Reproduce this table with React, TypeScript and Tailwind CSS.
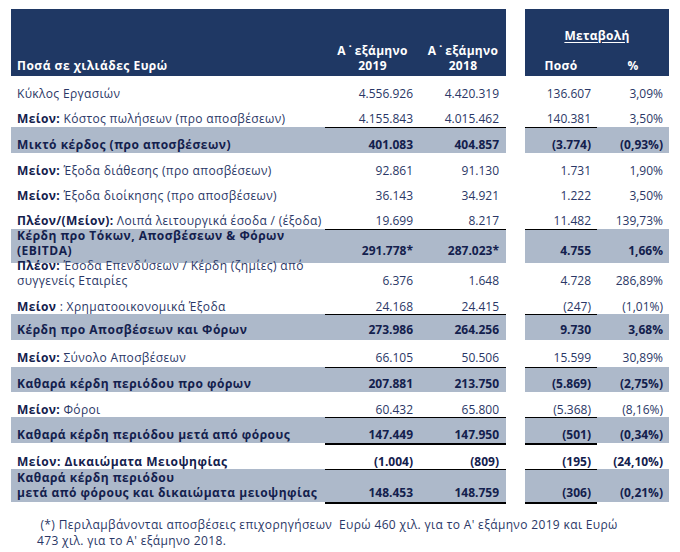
import React from "react";

type Row = {
  label: React.ReactNode;
  v: [string, string, string, string];
  grey?: boolean;
  bold?: boolean;
  h: string;
  pb: string;
  lineTop?: boolean;
  thick?: boolean;
};

const B = ({ children }: { children: React.ReactNode }) => (
  <span className="font-bold text-[#13204d]">{children}</span>
);

const rows: Row[] = [
  { label: "Κύκλος Εργασιών", v: ["4.556.926", "4.420.319", "136.607", "3,09%"], h: "h-[26px]", pb: "pb-[1px]" },
  { label: <><B>Μείον:</B> Κόστος πωλήσεων (προ αποσβέσεων)</>, v: ["4.155.843", "4.015.462", "140.381", "3,50%"], h: "h-[25px]", pb: "pb-[1px]" },
  { label: "Μικτό κέρδος (προ αποσβέσεων)", v: ["401.083", "404.857", "(3.774)", "(0,93%)"], grey: true, bold: true, h: "h-[26px]", pb: "pb-[1px]", lineTop: true },
  { label: <><B>Μείον:</B> Έξοδα διάθεσης (προ αποσβέσεων)</>, v: ["92.861", "91.130", "1.731", "1,90%"], h: "h-[26px]", pb: "pb-[1px]" },
  { label: <><B>Μείον:</B> Έξοδα διοίκησης (προ αποσβέσεων)</>, v: ["36.143", "34.921", "1.222", "3,50%"], h: "h-[25px]", pb: "pb-[1px]" },
  { label: <><B>Πλέον/(Μείον):</B> Λοιπά λειτουργικά έσοδα / (έξοδα)</>, v: ["19.699", "8.217", "11.482", "139,73%"], h: "h-[25px]", pb: "pb-[1px]" },
  { label: <>Κέρδη προ Τόκων, Αποσβέσεων &amp; Φόρων<br />(EBITDA)</>, v: ["291.778*", "287.023*", "4.755", "1,66%"], grey: true, bold: true, h: "h-[34px]", pb: "pb-[5px]", lineTop: true },
  { label: <><B>Πλέον:</B> Έσοδα Επενδύσεων / Κέρδη (ζημίες) από<br />συγγενείς Εταιρίες</>, v: ["6.376", "1.648", "4.728", "286,89%"], h: "h-[29px]", pb: "pb-[4px]" },
  { label: <><B>Μείον</B> : Χρηματοοικονομικά Έξοδα</>, v: ["24.168", "24.415", "(247)", "(1,01%)"], h: "h-[22px]", pb: "pb-[0px]" },
  { label: "Κέρδη προ Αποσβέσεων και Φόρων", v: ["273.986", "264.256", "9.730", "3,68%"], grey: true, bold: true, h: "h-[26px]", pb: "pb-[3px]", lineTop: true },
  { label: <><B>Μείον:</B> Σύνολο Αποσβέσεων</>, v: ["66.105", "50.506", "15.599", "30,89%"], h: "h-[27px]", pb: "pb-[2px]" },
  { label: "Καθαρά κέρδη περιόδου προ φόρων", v: ["207.881", "213.750", "(5.869)", "(2,75%)"], grey: true, bold: true, h: "h-[25px]", pb: "pb-[1px]", lineTop: true },
  { label: <><B>Μείον:</B> Φόροι</>, v: ["60.432", "65.800", "(5.368)", "(8,16%)"], h: "h-[25px]", pb: "pb-[0px]" },
  { label: "Καθαρά κέρδη περιόδου μετά από φόρους", v: ["147.449", "147.950", "(501)", "(0,34%)"], grey: true, bold: true, h: "h-[28px]", pb: "pb-[1px]", lineTop: true, thick: true },
  { label: "Μείον: Δικαιώματα Μειοψηφίας", v: ["(1.004)", "(809)", "(195)", "(24,10%)"], bold: true, h: "h-[24px]", pb: "pb-[0px]" },
  { label: <>Καθαρά κέρδη περιόδου<br />μετά από φόρους και δικαιώματα μειοψηφίας</>, v: ["148.453", "148.759", "(306)", "(0,21%)"], grey: true, bold: true, h: "h-[35px]", pb: "pb-[2px]", lineTop: true, thick: true },
];

function DataRow({ r }: { r: Row }) {
  const bg = r.grey ? "bg-[#adb9ca]" : "";
  const txt = r.bold ? "font-bold text-[#13204d]" : "text-[#2a3766]";
  const track = r.bold ? "tracking-[0.5px]" : "tracking-[0.35px]";
  const lineCls = r.lineTop ? "border-t border-black" : "";
  const thickCls = r.thick ? "border-b-2 border-b-black" : "";
  const thickWhite = r.thick ? "border-b-2 border-b-white" : "";
  return (
    <>
      <div className={`${r.h} ${bg} ${thickWhite} flex items-end pl-[6px] ${r.pb} ${txt} ${track} leading-[15px] whitespace-nowrap`}>
        <div>{r.label}</div>
      </div>
      <div className={`${r.h} ${bg} ${lineCls} ${thickCls} flex items-end justify-end pr-[7px] ${r.pb} ${txt} leading-[15px]`}>{r.v[0]}</div>
      <div className={`${r.h} ${bg} ${lineCls} ${thickCls} flex items-end justify-end pr-[7px] ${r.pb} ${txt} leading-[15px]`}>{r.v[1]}</div>
      <div className={`${r.h}`} />
      <div className={`${r.h} ${bg} ${lineCls} ${thickCls} flex items-end justify-end pr-[6px] ${r.pb} ${txt} leading-[15px]`}>{r.v[2]}</div>
      <div className={`${r.h} ${bg} ${thickWhite} flex items-end justify-end pr-[6px] ${r.pb} ${txt} leading-[15px]`}>{r.v[3]}</div>
    </>
  );
}

function Period({ year }: { year: string }) {
  return (
    <div className="h-[67px] bg-[#1f3864] flex flex-col items-center justify-end pb-[3px] text-white font-bold leading-[15px] tracking-[0.3px]">
      <div>
        Α<span className="inline-block w-[9px] text-center">{"\u02D9"}</span>εξάμηνο
      </div>
      <div>{year}</div>
    </div>
  );
}

export default function App() {
  return (
    <div className="w-[680px] h-[552px] bg-white font-['Open_Sans',sans-serif] text-[12px] text-[#2a3766] pt-[9px] pl-[11px] overflow-hidden">
      <div className="grid grid-cols-[314px_95px_86px_19px_72px_72px]">
        <div className="h-[67px] bg-[#1f3864] flex items-end pl-[6px] pb-[3px] text-white font-bold leading-[15px] tracking-[0.5px]">
          Ποσά σε χιλιάδες Ευρώ
        </div>
        <Period year="2019" />
        <Period year="2018" />
        <div className="h-[67px]" />
        <div className="col-span-2 h-[67px] bg-[#1f3864] flex flex-col justify-between pt-[19px] pb-[3px] text-white font-bold leading-[15px] tracking-[0.3px]">
          <div className="text-center underline underline-offset-2">Μεταβολή</div>
          <div className="grid grid-cols-2">
            <div className="text-center">Ποσό</div>
            <div className="text-center">%</div>
          </div>
        </div>
        {rows.map((r, i) => (
          <DataRow key={i} r={r} />
        ))}
      </div>
      <div className="mt-[13px] pl-[26px] leading-[16px] text-[#2a3766] tracking-[0.35px] whitespace-nowrap">
        {"\u00a0(*) Περιλαμβάνονται αποσβέσεις επιχορηγήσεων\u00a0 Ευρώ 460 χιλ. για το Α' εξάμηνο 2019 και Ευρώ"}
        <br />
        473 χιλ. για το Α' εξάμηνο 2018.
      </div>
    </div>
  );
}
